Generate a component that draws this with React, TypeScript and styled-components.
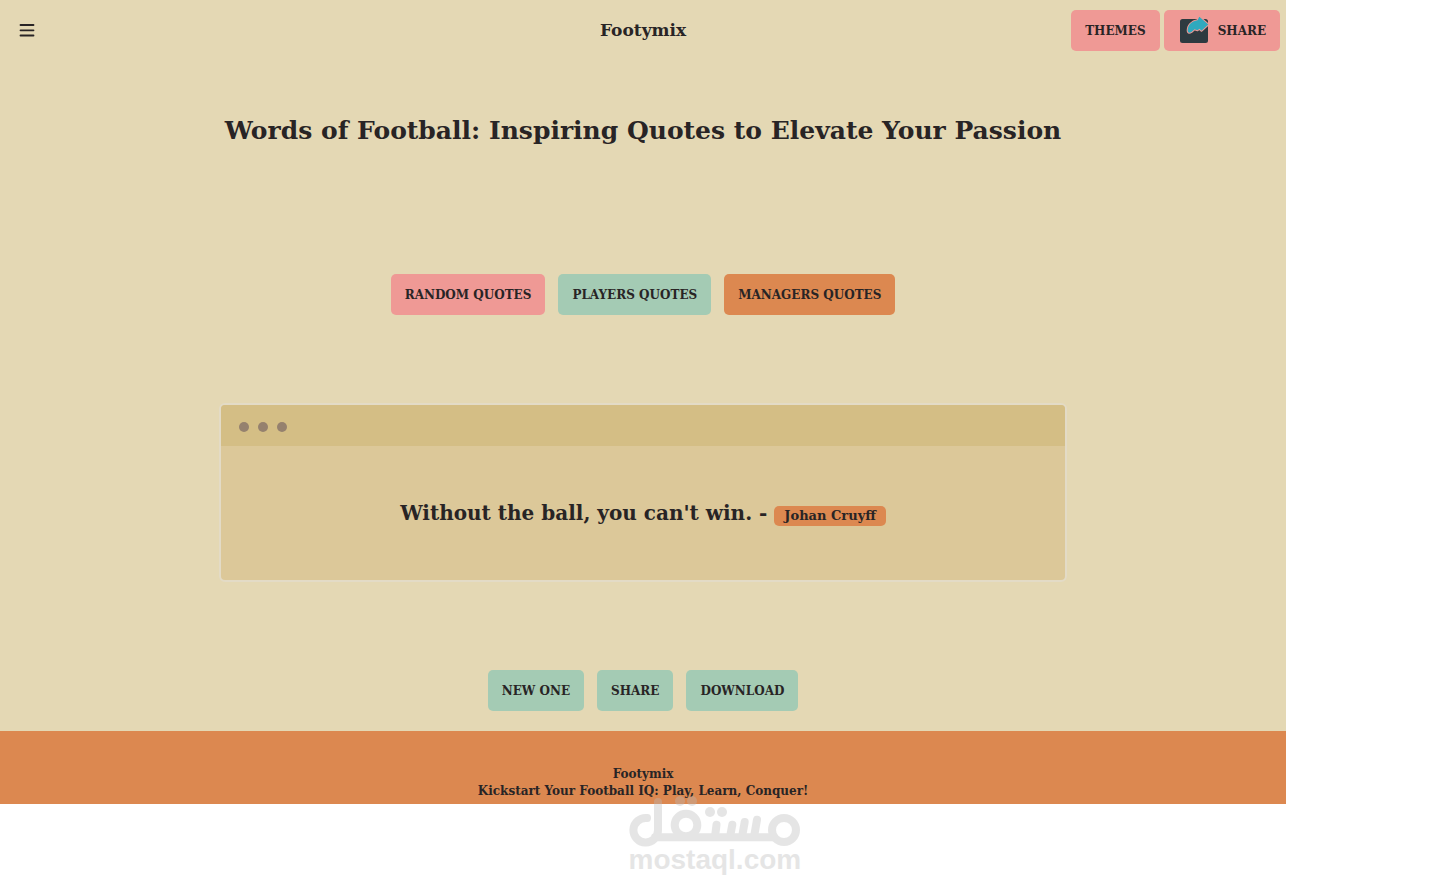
import React from "react";
import styled, { createGlobalStyle } from "styled-components";

const GlobalStyle = createGlobalStyle`
  *, *::before, *::after { box-sizing: border-box; }
  body {
    margin: 0;
    background: #fff;
    color: #282425;
    font-family: "DejaVu Serif", serif;
    font-weight: 700;
  }
  h1, p { margin: 0; }
`;

const tones = { pink: "#ef9995", mint: "#a4cbb4", orange: "#dc8850" };

const Page = styled.div`
  position: relative;
  min-height: 100vh;
`;

const Shell = styled.div`
  width: 90%;
  background: #e4d8b4;
`;

const Navbar = styled.header`
  display: grid;
  grid-template-columns: 1fr auto 1fr;
  align-items: center;
  padding: 10px 6px;
`;

const MenuButton = styled.button`
  display: flex;
  justify-self: start;
  padding: 11px;
  border: 0;
  background: none;
  color: inherit;
`;

const Brand = styled.a`
  padding-bottom: 2px;
  color: inherit;
  font-size: 17px;
  line-height: 24px;
  text-decoration: none;
`;

const NavActions = styled.div`
  display: flex;
  justify-content: flex-end;
  gap: 4px;
`;

const Button = styled.button<{ $tone: keyof typeof tones }>`
  display: inline-flex;
  align-items: center;
  gap: 10px;
  height: 41px;
  padding: 0 14px;
  border: 0;
  border-radius: 5px;
  background: ${({ $tone }) => tones[$tone]};
  color: inherit;
  font: inherit;
  font-size: 12px;
  text-transform: uppercase;
`;

const Main = styled.main`
  display: flex;
  flex-direction: column;
  align-items: center;
  padding: 51px 0 20px;
`;

const Title = styled.h1`
  font-size: 25px;
  line-height: 38px;
  text-align: center;
`;

const ButtonRow = styled.div`
  display: flex;
  flex-wrap: wrap;
  justify-content: center;
  gap: 13px;
`;

const Filters = styled(ButtonRow)`
  margin: 124px 0 88px;
`;

const Card = styled.section`
  width: 66%;
  margin-bottom: 88px;
  border: 2px solid #e3dbc6;
  border-radius: 6px;
  background: #dcc899;
`;

const CardBar = styled.div`
  display: flex;
  align-items: center;
  gap: 9px;
  height: 41px;
  padding: 2px 18px 0;
  background: #d4be85;
  border-radius: 4px 4px 0 0;
`;

const Dot = styled.span`
  width: 10px;
  height: 10px;
  border-radius: 50%;
  background: #95816e;
`;

const Quote = styled.p`
  padding: 52px 16px;
  font-size: 20px;
  line-height: 30px;
  text-align: center;
`;

const Author = styled.span`
  display: inline-block;
  padding: 0 10px;
  border-radius: 5px;
  background: ${tones.orange};
  font-size: 13px;
  line-height: 20px;
`;

const Footer = styled.footer`
  padding: 35px 16px 4px;
  background: ${tones.orange};
  font-size: 12px;
  line-height: 17px;
  text-align: center;
`;

const Watermark = styled.div`
  position: absolute;
  bottom: 20px;
  left: 50%;
  width: 172px;
  transform: translateX(-50%);
  opacity: 0.37;
  color: #bbb;
  font: 700 28px/26px "Liberation Sans", sans-serif;
  text-align: center;
  pointer-events: none;

  svg { display: block; }
`;

const MenuIcon = () => (
  <svg width="20" height="19" viewBox="0 0 20 19" fill="none" stroke="currentColor" strokeWidth="1.8" strokeLinecap="round">
    <path d="M3.500 4H16.500M3.500 9.300H16.500M3.500 14.500H16.500" />
  </svg>
);

const ShareIcon = () => (
  <svg width="30" height="29" viewBox="-1 0 30 29" overflow="visible">
    <rect x="1" y="3" width="28" height="24" rx="2.500" fill="#2e3a40" />
    <path
      d="M20.300 0.800L29.300 8.500L22.500 14.800L20.500 12.800L18.500 14.300L15.500 13.300L12.500 16Q9.300 18 8.700 15C8.500 9.500 12.500 5 18.500 4.300Z"
      fill="#2fa9be"
      stroke="#ef9995"
      strokeWidth="2"
      strokeLinejoin="round"
      paintOrder="stroke"
    />
  </svg>
);

const WatermarkLogo = () => (
  <svg width="172" height="52" viewBox="0 0 172 52" fill="none" stroke="currentColor" strokeWidth="8" strokeLinecap="round">
    <path d="M18 23A12.300 12.300 0 1 0 29 35V7M26 42.300H144" />
    <circle cx="57" cy="30" r="11.300" />
    <circle cx="155" cy="35" r="12" />
    <path d="M86 42L87.500 29.700M101 42L103.300 29.700M113 42L115.700 27M125 42L128 24.700" />
    <g fill="currentColor" stroke="none">
      <circle cx="51" cy="6" r="5" />
      <circle cx="63" cy="6" r="5" />
      <circle cx="81" cy="17" r="5" />
      <circle cx="93" cy="17" r="5" />
    </g>
  </svg>
);

export default function App() {
  return (
    <>
      <GlobalStyle />
      <Page>
        <Shell>
          <Navbar>
            <MenuButton type="button" aria-label="Open menu">
              <MenuIcon />
            </MenuButton>
            <Brand href="#">Footymix</Brand>
            <NavActions>
              <Button type="button" $tone="pink">Themes</Button>
              <Button type="button" $tone="pink">
                <ShareIcon />
                Share
              </Button>
            </NavActions>
          </Navbar>
          <Main>
            <Title>Words of Football: Inspiring Quotes to Elevate Your Passion</Title>
            <Filters>
              <Button type="button" $tone="pink">Random Quotes</Button>
              <Button type="button" $tone="mint">Players Quotes</Button>
              <Button type="button" $tone="orange">Managers Quotes</Button>
            </Filters>
            <Card>
              <CardBar>
                <Dot />
                <Dot />
                <Dot />
              </CardBar>
              <Quote>
                Without the ball, you can't win. - <Author>Johan Cruyff</Author>
              </Quote>
            </Card>
            <ButtonRow>
              <Button type="button" $tone="mint">New one</Button>
              <Button type="button" $tone="mint">Share</Button>
              <Button type="button" $tone="mint">Download</Button>
            </ButtonRow>
          </Main>
          <Footer>
            <p>Footymix</p>
            <p>Kickstart Your Football IQ: Play, Learn, Conquer!</p>
          </Footer>
        </Shell>
        <Watermark>
          <WatermarkLogo />
          mostaql.com
        </Watermark>
      </Page>
    </>
  );
}
